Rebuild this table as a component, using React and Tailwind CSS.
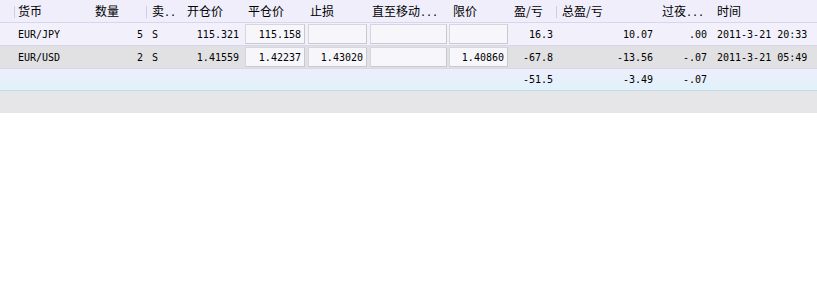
import React from "react";

const mono = "font-['DejaVu_Sans_Mono','Liberation_Mono',monospace] text-[10px] text-black";

const cols = [
  { key: "gutter", w: "w-[14px]" },
  { key: "ccy", w: "w-[76px]", head: "货币", pad: "pl-[4px]", sep: true },
  { key: "qty", w: "w-[56px]", head: "数量", pad: "pl-[5px]" },
  { key: "side", w: "w-[36px]", head: "卖", dots: "..", pad: "pl-[6px]", sep: true },
  { key: "open", w: "w-[61px]", head: "开仓价", pad: "pl-[5px]" },
  { key: "close", w: "w-[63px]", head: "平仓价", pad: "pl-[5px]" },
  { key: "stop", w: "w-[63px]", head: "止损", pad: "pl-[4px]" },
  { key: "trail", w: "w-[79px]", head: "直至移动", dots: "...", pad: "pl-[3px]" },
  { key: "limit", w: "w-[62px]", head: "限价", pad: "pl-[5px]" },
  { key: "pl", w: "w-[46px]", head: "盈/亏", pad: "pl-[4px]" },
  { key: "total", w: "w-[102px]", head: "总盈/亏", pad: "pl-[6px]", sep: true },
  { key: "swap", w: "w-[54px]", head: "过夜", dots: "...", pad: "pl-[4px]" },
  { key: "time", w: "flex-1", head: "时间", pad: "pl-[5px]" },
];

const rows = [
  {
    ccy: "EUR/JPY", qty: "5", side: "S", open: "115.321", close: "115.158",
    stop: "", trail: "", limit: "", pl: "16.3", total: "10.07", swap: ".00",
    time: "2011-3-21 20:33", bg: "bg-[#f2f1fb]",
  },
  {
    ccy: "EUR/USD", qty: "2", side: "S", open: "1.41559", close: "1.42237",
    stop: "1.43020", trail: "", limit: "1.40860", pl: "-67.8", total: "-13.56", swap: "-.07",
    time: "2011-3-21 05:49", bg: "bg-[#e1e1e4]",
  },
];

const Box = ({ value, pad }) => (
  <div className={`h-full ${pad} py-[1px]`}>
    <div className="h-full flex items-center justify-end pr-[3px] bg-[#f7f7fb] border border-[#d6d6dd] border-r-[#c8c8d0] border-b-[#c8c8d0]">
      {value}
    </div>
  </div>
);

const App = () => {
  return (
    <div className="w-[817px] h-[293px] bg-white font-['Noto_Sans_CJK_SC',sans-serif] text-[12px] text-black">
      <div className="flex h-[23px] bg-[#efeefa] border-b border-[#d8d6ec]">
        {cols.map((c) => (
          <div key={c.key} className={`${c.w} relative flex items-center`}>
            {c.sep && <div className="absolute left-0 top-[6px] h-[12px] w-px bg-[#cfcde3]" />}
            {c.head && (
              <span className={`${c.pad} flex items-center`}>
                {c.head}
                {c.dots && <span className={`${mono} pt-[3px]`}>{c.dots}</span>}
              </span>
            )}
          </div>
        ))}
      </div>

      {rows.map((r, i) => (
        <div key={i} className={`flex h-[23px] ${r.bg} border-b border-[#d8d6ec] ${mono}`}>
          <div className="w-[14px]" />
          <div className="w-[76px] flex items-center pl-[4px]">{r.ccy}</div>
          <div className="w-[56px] flex items-center justify-end pr-[3px]">{r.qty}</div>
          <div className="w-[36px] flex items-center pl-[6px]">{r.side}</div>
          <div className="w-[61px] flex items-center justify-end pr-[4px]">{r.open}</div>
          <div className="w-[63px]"><Box value={r.close} pad="pl-[2px] pr-[1px]" /></div>
          <div className="w-[63px]"><Box value={r.stop} pad="px-[2px]" /></div>
          <div className="w-[79px]"><Box value={r.trail} pad="px-[1px]" /></div>
          <div className="w-[62px]"><Box value={r.limit} pad="pl-[1px] pr-[2px]" /></div>
          <div className="w-[46px] flex items-center justify-end pr-[3px]">{r.pl}</div>
          <div className="w-[102px] flex items-center justify-end pr-[5px]">{r.total}</div>
          <div className="w-[54px] flex items-center justify-end pr-[5px]">{r.swap}</div>
          <div className="flex-1 flex items-center pl-[5px]">{r.time}</div>
        </div>
      ))}

      <div className={`flex h-[22px] bg-gradient-to-b from-[#eeedfb] to-[#e0f2fb] border-b border-[#bfdde7] ${mono}`}>
        <div className="w-[510px]" />
        <div className="w-[46px] flex items-center justify-end pr-[3px]">-51.5</div>
        <div className="w-[102px] flex items-center justify-end pr-[5px]">-3.49</div>
        <div className="w-[54px] flex items-center justify-end pr-[5px]">-.07</div>
        <div className="flex-1" />
      </div>

      <div className="h-[22px] bg-[#e6e6e9]" />
    </div>
  );
};

export default App;
